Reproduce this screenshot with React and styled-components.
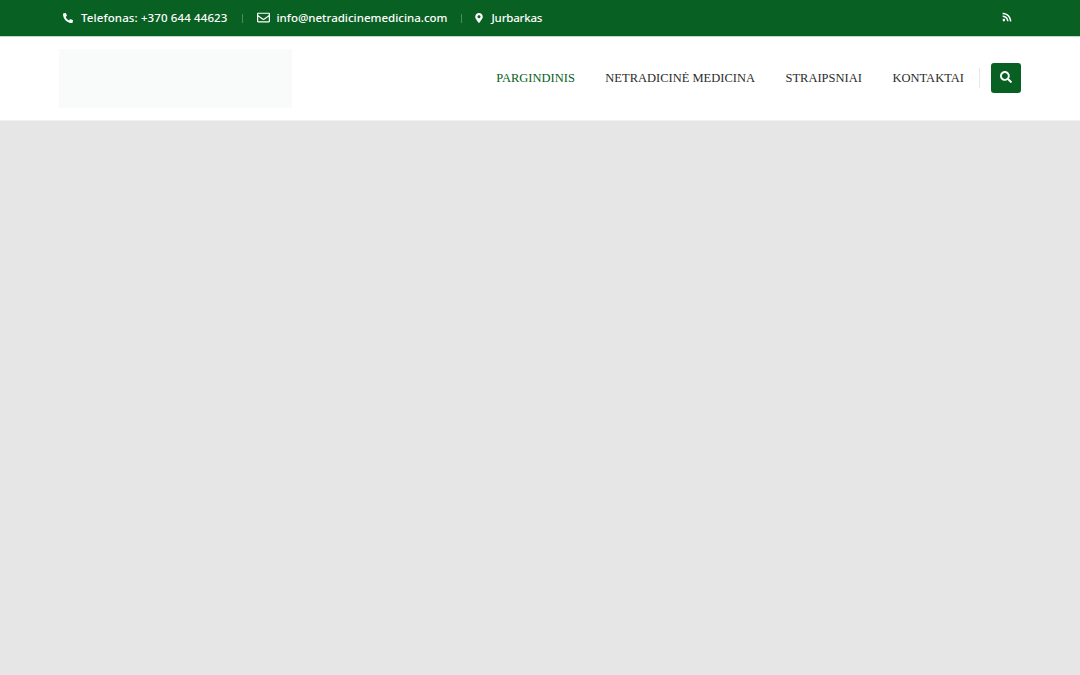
import React from "react";
import styled, { createGlobalStyle } from "styled-components";
import { FaPhoneAlt, FaRegEnvelope, FaMapMarkerAlt, FaRss, FaSearch } from "react-icons/fa";

const GlobalStyle = createGlobalStyle`
  html, body {
    margin: 0;
    padding: 0;
    height: 100%;
    background: #e6e6e6;
  }
  #root {
    min-height: 100%;
  }
`;

const TopBar = styled.div`
  height: 36px;
  background: #096023;
  border-bottom: 1px solid #bcd8c6;
  display: flex;
  align-items: center;
  justify-content: space-between;
  padding: 0 59px 0 63px;
  margin-bottom: -1px;
  position: relative;
`;

const ContactList = styled.div`
  display: flex;
  align-items: center;
  margin-top: -1px;
`;

const ContactItem = styled.span`
  display: flex;
  align-items: center;
  gap: ${(p) => p.$gap || 8}px;
  color: #fff;
  font: 500 11.5px "Noto Sans", sans-serif;
  letter-spacing: ${(p) => p.$tracking || 0}px;
  white-space: nowrap;
  svg {
    font-size: ${(p) => p.$icon || 10}px;
  }
`;

const Divider = styled.span`
  width: 1px;
  height: 9px;
  background: #4f8a60;
  margin: 2px ${(p) => p.$right || 14}px 0 14px;
`;

const RssLink = styled.a`
  display: flex;
  color: #fff;
  font-size: 10px;
  margin: -3px 9px 0 0;
`;

const Header = styled.header`
  height: 84px;
  background: #fff;
  display: flex;
  align-items: center;
  justify-content: space-between;
  padding: 0 59px;
  border-bottom: 1px solid #f1f1f1;
`;

const LogoBlock = styled.div`
  width: 233px;
  height: 59px;
  background: #f9fbfa;
  margin-top: 1px;
`;

const Nav = styled.nav`
  display: flex;
  align-items: center;
`;

const NavLink = styled.a`
  font: 12.5px "Liberation Serif", serif;
  color: ${(p) => (p.$active ? "#096023" : "#2b2b2b")};
  margin-left: 30.5px;
  white-space: nowrap;
`;

const NavDivider = styled.span`
  width: 1px;
  height: 20px;
  background: #e8e8e8;
  margin: 0 11px 0 15px;
`;

const SearchButton = styled.button`
  width: 30px;
  height: 30px;
  border: 0;
  border-radius: 3px;
  background: #096023;
  color: #fff;
  display: flex;
  align-items: center;
  justify-content: center;
  font-size: 12px;
  padding: 0 0 2px;
`;

const Main = styled.main`
  height: 554px;
  background: #e6e6e6;
`;

export default function App() {
  return (
    <>
      <GlobalStyle />
      <TopBar>
        <ContactList>
          <ContactItem $tracking={0.12}>
            <FaPhoneAlt />
            Telefonas: +370 644 44623
          </ContactItem>
          <Divider />
          <ContactItem $icon={13} $gap={7}>
            <FaRegEnvelope />
            info@netradicinemedicina.com
          </ContactItem>
          <Divider $right={12} />
          <ContactItem $tracking={-0.2} $gap={7}>
            <FaMapMarkerAlt />
            Jurbarkas
          </ContactItem>
        </ContactList>
        <RssLink>
          <FaRss />
        </RssLink>
      </TopBar>
      <Header>
        <LogoBlock />
        <Nav>
          <NavLink $active>PARGINDINIS</NavLink>
          <NavLink>NETRADICINĖ MEDICINA</NavLink>
          <NavLink>STRAIPSNIAI</NavLink>
          <NavLink>KONTAKTAI</NavLink>
          <NavDivider />
          <SearchButton aria-label="Ieškoti">
            <FaSearch />
          </SearchButton>
        </Nav>
      </Header>
      <Main />
    </>
  );
}
